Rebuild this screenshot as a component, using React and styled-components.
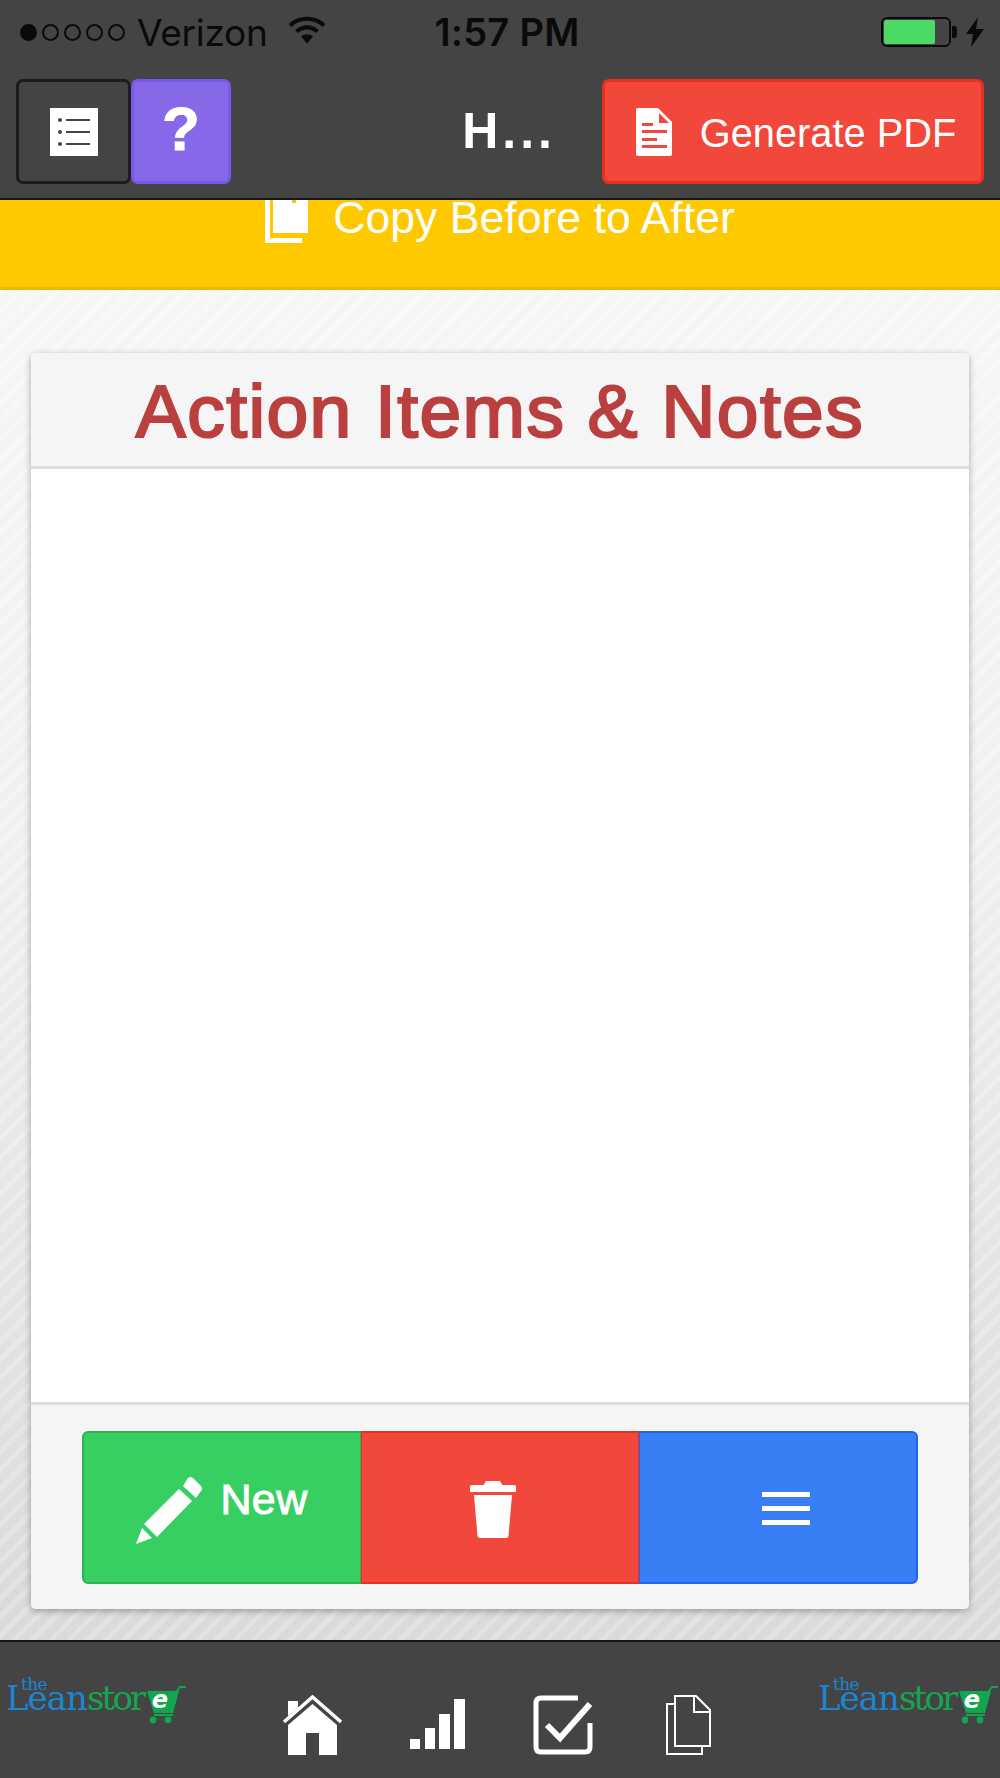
import styled, { createGlobalStyle } from "styled-components";

const GlobalStyle = createGlobalStyle`
  html, body {
    margin: 0;
    padding: 0;
    background: #444;
  }
  * {
    box-sizing: border-box;
  }
`;

const Page = styled.div`
  width: 1000px;
  height: 1778px;
  display: flex;
  flex-direction: column;
  overflow: hidden;
  font-family: "Liberation Sans", Arial, sans-serif;
`;

const TopArea = styled.header`
  background: #444;
  height: 200px;
  border-bottom: 2px solid #161616;
  display: flex;
  flex-direction: column;
`;

const StatusBar = styled.div`
  height: 79px;
  padding: 0 16px 15px 20px;
  display: grid;
  grid-template-columns: 1fr auto 1fr;
  align-items: center;
  color: #0a0a0a;
`;

const StatusLeft = styled.div`
  display: flex;
  align-items: center;
`;

const Signal = styled.div`
  display: flex;
  gap: 5px;
  margin-right: 12px;
`;

const Dot = styled.span`
  width: 17px;
  height: 17px;
  border-radius: 50%;
  border: 2px solid #0a0a0a;
  background: ${(p) => (p.$on ? "#0a0a0a" : "transparent")};
`;

const Carrier = styled.span`
  font-family: "Inter", "Liberation Sans", sans-serif;
  font-size: 37px;
  margin-right: 20px;
  letter-spacing: -0.3px;
`;

const Clock = styled.span`
  font-family: "Inter", "Liberation Sans", sans-serif;
  font-size: 38px;
  font-weight: 600;
  letter-spacing: 0.3px;
  margin-left: 10px;
`;

const StatusRight = styled.div`
  display: flex;
  justify-content: flex-end;
  align-items: center;
  gap: 8px;
`;

const Battery = styled.div`
  width: 70px;
  height: 30px;
  border: 2px solid #0a0a0a;
  border-radius: 6px;
  padding: 1px;
  position: relative;
  &::after {
    content: "";
    position: absolute;
    right: -8px;
    top: 7px;
    width: 5px;
    height: 12px;
    background: #0a0a0a;
    border-radius: 0 3px 3px 0;
  }
`;

const BatteryFill = styled.div`
  width: 51px;
  height: 100%;
  background: #4cd964;
  border-radius: 2px;
`;

const Toolbar = styled.div`
  height: 105px;
  padding: 0 16px;
  display: flex;
  align-items: stretch;
`;

const ToolButton = styled.button`
  width: ${(p) => p.$width}px;
  background: ${(p) => p.$bg};
  border: 3px solid ${(p) => p.$border};
  border-radius: 7px;
  color: #fff;
  padding: 0 0 0 ${(p) => p.$pl || 0}px;
  display: flex;
  align-items: center;
  justify-content: center;
  font-family: inherit;
`;

const HelpMark = styled.span`
  font-size: 62px;
  font-weight: 700;
  line-height: 1;
  margin-top: -5px;
  -webkit-text-stroke: 1px #fff;
`;

const Title = styled.div`
  flex: 1;
  color: #fff;
  font-size: 50px;
  font-weight: 700;
  text-align: right;
  padding-right: 46px;
  line-height: 105px;
  letter-spacing: 4px;
`;

const PdfLabel = styled.span`
  font-size: 39.8px;
  margin-left: 28px;
  margin-top: 3px;
`;

const Banner = styled.div`
  height: 90px;
  background: #ffc900;
  border-bottom: 3px solid #ebb708;
  display: flex;
  justify-content: center;
  align-items: flex-start;
  color: #fff;
`;

const BannerLabel = styled.span`
  font-size: 44.6px;
  line-height: 36px;
  margin-left: 24px;
`;

const Content = styled.main`
  flex: 1;
  padding: 63px 31px 31px;
  display: flex;
  background:
    repeating-linear-gradient(
      135deg,
      rgba(255, 255, 255, 0.18) 0 5px,
      rgba(0, 0, 0, 0.008) 5px 13px
    ),
    linear-gradient(180deg, #f8f8f8 0%, #f2f2f2 40%, #dcdcdc 100%);
`;

const Card = styled.section`
  flex: 1;
  background: #fff;
  border-radius: 5px;
  display: flex;
  flex-direction: column;
  overflow: hidden;
  box-shadow: 0 2px 7px rgba(0, 0, 0, 0.32);
`;

const CardHeader = styled.div`
  height: 116px;
  background: #f5f5f5;
  border-bottom: 3px solid #dedede;
  color: #b9403f;
  font-size: 75px;
  letter-spacing: 1.4px;
  text-align: center;
  line-height: 116px;
  -webkit-text-stroke: 2.2px #b9403f;
`;

const CardBody = styled.div`
  flex: 1;
`;

const CardFooter = styled.div`
  height: 207px;
  background: #f5f5f5;
  border-top: 3px solid #dedede;
  padding: 26px 51px 25px;
  display: flex;
`;

const ActionButton = styled.button`
  flex: 1;
  background: ${(p) => p.$bg};
  border: 2px solid ${(p) => p.$border};
  border-left-width: ${(p) => (p.$first ? 2 : 1)}px;
  border-right-width: ${(p) => (p.$last ? 2 : 1)}px;
  border-radius: ${(p) => (p.$first ? "6px 0 0 6px" : p.$last ? "0 6px 6px 0" : "0")};
  color: #fff;
  padding: 0;
  display: flex;
  align-items: center;
  justify-content: center;
  font-family: inherit;
`;

const NewLabel = styled.span`
  font-size: 43px;
  letter-spacing: 0.4px;
  -webkit-text-stroke: 1px #fff;
  margin-left: 17px;
  margin-bottom: 17px;
`;

const BottomBar = styled.footer`
  height: 138px;
  background: #444;
  border-top: 2px solid #161616;
  padding: 37px 2px 0 6px;
  display: flex;
  justify-content: space-between;
  align-items: flex-start;
`;

const Logo = styled.div`
  width: 180px;
  height: 48px;
  position: relative;
  display: flex;
  align-items: flex-start;
  font-family: "DejaVu Serif", "Liberation Serif", serif;
  font-size: 34px;
  line-height: 38px;
`;

const LogoThe = styled.span`
  position: absolute;
  left: 15px;
  top: -5px;
  color: #1b86d2;
  font-size: 17px;
  line-height: 20px;
  letter-spacing: -0.6px;
`;

const LogoLean = styled.span`
  color: #1b86d2;
  letter-spacing: -1px;
`;

const LogoStore = styled.span`
  color: #12a650;
  letter-spacing: -2.8px;
`;

const LogoCart = styled.svg`
  position: absolute;
  left: 140px;
  top: 5px;
`;

const BottomNav = styled.nav`
  display: flex;
  align-items: flex-start;
  margin-top: 16px;
  margin-left: -10px;
`;

const NavIcon = styled.svg`
  display: block;
  margin-left: ${(p) => p.$ml || 0}px;
  margin-top: ${(p) => p.$mt || 0}px;
`;

const TrashIcon = styled.svg`
  margin-right: 15px;
  margin-top: 4px;
`;

const BurgerIcon = styled.svg`
  margin-left: 16px;
  margin-top: 2px;
`;

const ListIcon = () => (
  <svg width="48" height="48" viewBox="0 0 48 48">
    <rect width="48" height="48" fill="#fff" />
    <g fill="#444">
      <circle cx="10" cy="12" r="2" />
      <circle cx="10" cy="24" r="2" />
      <circle cx="10" cy="36" r="2" />
      <rect x="16" y="11" width="24" height="2" />
      <rect x="16" y="23" width="24" height="2" />
      <rect x="16" y="35" width="24" height="2" />
    </g>
  </svg>
);

const FileIcon = () => (
  <svg width="36" height="48" viewBox="0 0 36 48">
    <path d="M2 0H22L36 14V46a2 2 0 0 1-2 2H2a2 2 0 0 1-2-2V2a2 2 0 0 1 2-2Z" fill="#fff" />
    <path d="M23 5L33 15H23Z" fill="#f2483b" />
    <g fill="#f2483b">
      <rect x="6" y="15" width="11" height="3" />
      <rect x="6" y="22" width="25" height="3" />
      <rect x="6" y="30" width="15" height="3" />
      <rect x="6" y="37" width="25" height="3" />
    </g>
  </svg>
);

const CopyFilled = () => (
  <svg width="44" height="43" viewBox="0 0 44 43" style={{ flexShrink: 0 }}>
    <path d="M0 0H5V38H37V43H0Z" fill="#fff" />
    <path d="M8 0H27V3H31V0H43V33H8Z" fill="#fff" />
  </svg>
);

const Wifi = () => (
  <svg width="38" height="30" viewBox="0 0 38 30" style={{ marginTop: -5 }}>
    <g fill="none" stroke="#0a0a0a" strokeWidth="4.2">
      <path d="M2 10.5C11.5 1.5 26.5 1.5 36 10.5" />
      <path d="M8.5 16.5C14.5 11 23.5 11 29.5 16.5" />
    </g>
    <path d="M13 21.5C16.5 18.5 21.5 18.5 25 21.5L19 28.5Z" fill="#0a0a0a" />
  </svg>
);

const Bolt = () => (
  <svg width="18" height="30" viewBox="0 0 18 30" style={{ marginLeft: 7 }}>
    <path d="M12 0L0 17H7L5 30L18 12H10Z" fill="#0a0a0a" />
  </svg>
);

const Pencil = () => (
  <svg width="67" height="67" viewBox="0 0 67 67" style={{ marginTop: 5 }}>
    <g fill="#fff">
      <path d="M0 67L6 51L16 61Z" />
      <path d="M8 47L43 12L56 24L21 60Z" />
      <path d="M47 9L52 1Q54 -1 57 1L65 9Q67 12 65 14L60 21Z" />
    </g>
  </svg>
);

const Trash = () => (
  <TrashIcon width="46" height="57" viewBox="0 0 46 57">
    <g fill="#fff">
      <path d="M16 0H30L33 5H13Z" />
      <path d="M2 4H44Q46 4 46 6V11H0V6Q0 4 2 4Z" />
      <path d="M4 14H42L38.5 55Q38.3 57 36 57H10Q7.7 57 7.5 55Z" />
    </g>
  </TrashIcon>
);

const Burger = () => (
  <BurgerIcon width="48" height="34" viewBox="0 0 48 34">
    <g fill="#fff">
      <rect y="0" width="48" height="5" />
      <rect y="14" width="48" height="5" />
      <rect y="28" width="48" height="5" />
    </g>
  </BurgerIcon>
);

const Cart = () => (
  <LogoCart width="42" height="42" viewBox="0 0 42 42">
    <path d="M1 7H33L27 29H8Z" fill="#12a650" />
    <path d="M30 8L34 3H40" fill="none" stroke="#12a650" strokeWidth="2" />
    <path d="M8 31H27" stroke="#12a650" strokeWidth="2" />
    <circle cx="7" cy="36" r="3.4" fill="#12a650" />
    <circle cx="22" cy="36" r="3.4" fill="#12a650" />
    <text
      x="14"
      y="24"
      textAnchor="middle"
      fill="#fff"
      fontFamily="DejaVu Sans, sans-serif"
      fontSize="24"
      fontStyle="italic"
      fontWeight="700"
    >
      e
    </text>
  </LogoCart>
);

const StoreLogo = () => (
  <Logo>
    <LogoThe>the</LogoThe>
    <LogoLean>Lean</LogoLean>
    <LogoStore>stor</LogoStore>
    <Cart />
  </Logo>
);

export default function App() {
  return (
    <Page>
      <GlobalStyle />
      <TopArea>
        <StatusBar>
          <StatusLeft>
            <Signal>
              <Dot $on />
              <Dot />
              <Dot />
              <Dot />
              <Dot />
            </Signal>
            <Carrier>Verizon</Carrier>
            <Wifi />
          </StatusLeft>
          <Clock>1:57 PM</Clock>
          <StatusRight>
            <Battery>
              <BatteryFill />
            </Battery>
            <Bolt />
          </StatusRight>
        </StatusBar>
        <Toolbar>
          <ToolButton $width={115} $bg="#444" $border="#1c1c1c">
            <ListIcon />
          </ToolButton>
          <ToolButton $width={100} $bg="#8668e8" $border="#7a57ea">
            <HelpMark>?</HelpMark>
          </ToolButton>
          <Title>H...</Title>
          <ToolButton $width={382} $pl={6} $bg="#f2483b" $border="#e8301f">
            <FileIcon />
            <PdfLabel>Generate PDF</PdfLabel>
          </ToolButton>
        </Toolbar>
      </TopArea>
      <Banner>
        <CopyFilled />
        <BannerLabel>Copy Before to After</BannerLabel>
      </Banner>
      <Content>
        <Card>
          <CardHeader>Action Items &amp; Notes</CardHeader>
          <CardBody />
          <CardFooter>
            <ActionButton $first $bg="#37cf62" $border="#2cb353">
              <Pencil />
              <NewLabel>New</NewLabel>
            </ActionButton>
            <ActionButton $bg="#f2483b" $border="#e8301f">
              <Trash />
            </ActionButton>
            <ActionButton $last $bg="#3a7ef6" $border="#1e66ee">
              <Burger />
            </ActionButton>
          </CardFooter>
        </Card>
      </Content>
      <BottomBar>
        <StoreLogo />
        <BottomNav>
          <NavIcon width="59" height="60" viewBox="0 0 59 60">
            <path d="M1 27L29.5 2L58 27" fill="none" stroke="#fff" strokeWidth="3.5" />
            <path d="M5 21V6H15V13Z" fill="#fff" />
            <path d="M29.5 9L54 30V60H36V38H23V60H5V30Z" fill="#fff" />
          </NavIcon>
          <NavIcon $ml={68} $mt={4} width="55" height="50" viewBox="0 0 55 50">
            <g fill="#fff">
              <rect x="0" y="40" width="10" height="10" />
              <rect x="15" y="29" width="10" height="21" />
              <rect x="29" y="15" width="11" height="35" />
              <rect x="44" y="0" width="11" height="50" />
            </g>
          </NavIcon>
          <NavIcon $ml={68} width="60" height="60" viewBox="0 0 60 60">
            <path
              d="M45 3H8Q3 3 3 8V52Q3 57 8 57H52Q57 57 57 52V28"
              fill="none"
              stroke="#fff"
              strokeWidth="5"
            />
            <path d="M14 30L27 43L57 9" fill="none" stroke="#fff" strokeWidth="6" />
          </NavIcon>
          <NavIcon $ml={73} width="45" height="60" viewBox="0 0 45 60">
            <g fill="none" stroke="#fff" strokeWidth="2">
              <path d="M9 9H1V59H36V51" />
              <path d="M9 1H30L44 15V51H9Z" />
              <path d="M28 1V17H44" />
            </g>
          </NavIcon>
        </BottomNav>
        <StoreLogo />
      </BottomBar>
    </Page>
  );
}
